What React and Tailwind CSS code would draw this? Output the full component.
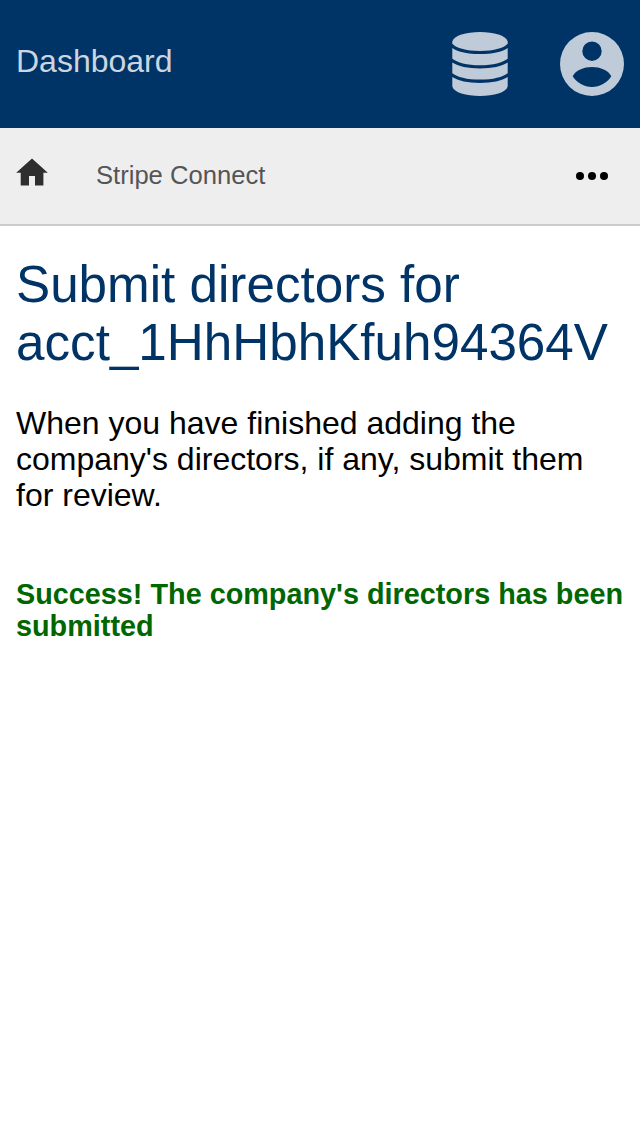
export default function App() {
  return (
    <div className="min-h-[1136px] bg-white font-['Liberation_Sans',Arial,sans-serif] text-black">
      <header className="flex h-32 items-start justify-between bg-[#003366] px-4">
        <a className="mt-[43px] text-[32px] leading-[36px] text-[#ccd6e0]">Dashboard</a>
        <div className="mt-8 flex gap-[52px] text-[#bfcbd8]">
          <svg className="h-16 w-14" viewBox="0 0 56 64" fill="currentColor">
            <path d="M.3 9.500C2 3.500 14 0 28 0s26 3.500 27.700 9.500v2C53 15.800 42 19 28 19S3 15.800.3 11.500z" />
            <path d="M.3 16C6 20 16 22 28 22s22-2 27.700-6v10.700C51 30.500 41 33.200 28 33.200S5 30.500.3 26.700z" />
            <path d="M.3 30.500C6 34.400 16 36.400 28 36.400s22-2 27.700-5.900v10.700C51 45 41 47.600 28 47.600S5 45 .3 41.200z" />
            <path d="M.3 45C6 48.900 16 50.900 28 50.900s22-2 27.700-5.900v9.500C54 60.500 42 64 28 64S2 60.500.3 54.500z" />
          </svg>
          <svg className="size-16" viewBox="0 0 64 64" fill="currentColor" fillRule="evenodd">
            <path d="M32 0a32 32 0 1 1 0 64 32 32 0 0 1 0-64zM32 9.500a9.700 9.700 0 1 0 0 19.400 9.700 9.700 0 0 0 0-19.400zM12.700 44.300C17 51 24 55 32 55s15-4 19.300-10.700C48.500 38.500 40.500 35.100 32 35.100S15.500 38.500 12.700 44.300z" />
          </svg>
        </div>
      </header>
      <nav className="flex h-[98px] items-start border-b-2 border-[#cccccc] bg-[#eeeeee] px-4">
        <svg className="mt-[30px] h-[28px] w-8" viewBox="0 0 32 28" fill="#2e2e2e">
          <path d="M16 .4 31.800 14.700H27.400V27.600H19V18H13V27.600H4.700V14.700H.2z" />
        </svg>
        <a className="ml-12 mt-[33px] text-[25.6px] leading-[29px] text-[#555555]">Stripe Connect</a>
        <svg className="ml-auto mr-4 mt-[44px] h-2 w-8" viewBox="0 0 32 8">
          <circle cx="4" cy="4" r="4" /><circle cx="16" cy="4" r="4" /><circle cx="28" cy="4" r="4" />
        </svg>
      </nav>
      <main className="px-4 pt-[30px]">
        <h1 className="text-[51.2px] leading-[58px] text-[#003366]">Submit directors for acct_1HhHbhKfuh94364V</h1>
        <p className="mt-[33px] text-[32px] leading-[36px]">When you have finished adding the company's directors, if any, submit them for review.</p>
        <p className="mt-[65px] text-[28.8px] font-bold leading-[32px] text-[#006600]">Success! The company's directors has been submitted</p>
      </main>
    </div>
  );
}
